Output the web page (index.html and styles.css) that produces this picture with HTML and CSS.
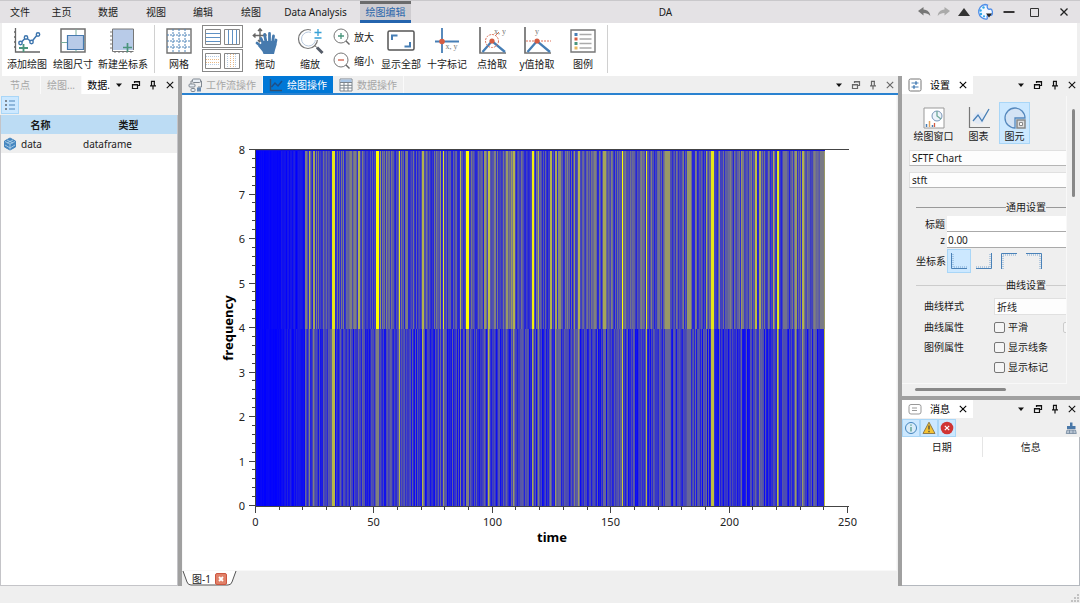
FILE: index.html
```html
<!DOCTYPE html>
<html lang="zh-CN">
<head>
<meta charset="utf-8">
<title>DA</title>
<link rel="stylesheet" href="styles.css">
</head>
<body>
<svg class="defs" aria-hidden="true">
  <symbol id="i-down" viewBox="0 0 10 10"><path d="M2 3.500h6L5 7z" fill="currentColor"/></symbol>
  <symbol id="i-float" viewBox="0 0 10 10"><path d="M3.500 3V1.500h5v4H7M3.500 2h5M1.500 4.500H6.500V8.500h-5zM1.500 5h5" fill="none" stroke="currentColor" stroke-width="1.200"/></symbol>
  <symbol id="i-pin" viewBox="0 0 10 10"><path d="M3.500 1v4.500M6.300 1v4.500M3 1.300h4M2 5.800h6M5 6v3.500" fill="none" stroke="currentColor" stroke-width="1.200"/></symbol>
  <symbol id="i-x" viewBox="0 0 10 10"><path d="M1.800 1.800l6.400 6.400M8.200 1.800L1.800 8.200" fill="none" stroke="currentColor" stroke-width="1.100"/></symbol>
</svg>

<div class="app">
  <header class="titlebar">
    <nav class="menus">
      <button>文件</button><button>主页</button><button>数据</button><button>视图</button><button>编辑</button><button>绘图</button><button>Data Analysis</button><button class="active">绘图编辑</button>
    </nav>
    <h1>DA</h1>
    <div class="window-tools">
      <button aria-label="撤销"><svg viewBox="0 0 14 14"><path d="M1 6L6.500 2v2.500C11 5 13 7.500 13.300 11 11.500 8.700 9.500 8 6.500 8v2.500z" fill="#777"/></svg></button>
      <button aria-label="重做"><svg viewBox="0 0 14 14"><path d="M13 6L7.500 2v2.500C3 5 1 7.500.7 11 2.500 8.700 4.500 8 7.500 8v2.500z" fill="#aaa"/></svg></button>
      <button aria-label="折叠"><svg viewBox="0 0 14 14"><path d="M1 11L7 3l6 8z" fill="#333"/></svg></button>
      <button class="wide" aria-label="主题"><svg class="palette" viewBox="0 0 18 18"><path d="M9 1.500a7 7 0 1 0 2 14.500c1-.8-.6-2.200.3-3.200 1-1 3 .3 4.500-.8C17 10 16.500 6 14.500 6 12 7 10.500 4.500 11.500 2A8 8 0 0 0 9 1.500z" fill="#f3f8ff" stroke="#4d8ce8" stroke-width="1.300"/><g fill="#2fa8e8"><circle cx="7.500" cy="4.500" r="1.200"/><circle cx="4.600" cy="7.500" r="1.200"/><circle cx="5" cy="11" r="1.200"/><circle cx="8" cy="13.300" r="1.100"/></g><path d="M10 10.500h6l-3 4z" fill="#222"/></svg></button>
      <button class="win" aria-label="最小化"><svg viewBox="0 0 14 14"><path d="M1.500 7h11" stroke="#222" stroke-width="1.800"/></svg></button>
      <button class="win" aria-label="最大化"><svg viewBox="0 0 14 14"><path d="M2.500 3.500h8v8h-8z" fill="none" stroke="#333"/></svg></button>
      <button class="win last" aria-label="关闭"><svg viewBox="0 0 14 14"><path d="M3.500 3.500l7 7M10.500 3.500l-7 7" stroke="#222" stroke-width="1.300"/></svg></button>
    </div>
  </header>

  <section class="ribbon">
    <button class="tool"><svg viewBox="0 0 28 28"><path d="M2.500 1v24H27M1 5h2M1 10h2M1 15h2M1 20h2" fill="none" stroke="#666" stroke-width="1.300"/><path d="M7.500 16L13 10.500l5.500 4.500 6-7.500" fill="none" stroke="#3c74ad" stroke-width="1.500"/><g fill="#fff" stroke="#3c74ad" stroke-width="1.400"><circle cx="7.500" cy="16" r="1.700"/><circle cx="13" cy="10.500" r="1.700"/><circle cx="18.500" cy="15" r="1.700"/><circle cx="25" cy="7.500" r="1.700"/></g><path d="M10.500 17v8M6 21h9" stroke="#4a957c" stroke-width="1.800"/></svg><span>添加绘图</span></button>
    <button class="tool"><svg viewBox="0 0 28 28"><path d="M2 2h24v23H2z" fill="#fff" stroke="#707070" stroke-width="1.500"/><path d="M17 2v23M2 15.500h24" stroke="#78ad9b"/><path d="M8.500 8.500h16v14h-16z" fill="#b8cbe8" stroke="#467ab0" stroke-width="1.200"/></svg><span>绘图尺寸</span></button>
    <button class="tool w54"><svg viewBox="0 0 28 28"><path d="M3.500 2h21v21h-21z" fill="#b8cbe8"/><path d="M3.500 2h21M3.500 2v22.500M24.500 2v21M3.500 24.500h21" stroke="#777" fill="none"/><path d="M1 5h2M1 9h2M1 13h2M1 17h2M1 21h2M6 24v2M10 24v2M14 24v2M18 24v2M22 24v2" stroke="#777"/><path d="M18.500 16v9M14 20.500h9" stroke="#4a957c" stroke-width="1.700"/></svg><span>新建坐标系</span></button>
    <i class="rule"></i>
    <button class="tool w42"><svg viewBox="0 0 28 28"><path d="M2 2h24v24H2z" fill="#fff" stroke="#707070" stroke-width="1.400"/><path d="M8 2v24M14 2v24M20 2v24M2 8h24M2 14h24M2 20h24" stroke="#4c83b8" stroke-dasharray="2 1"/></svg><span>网格</span></button>
    <div class="grids">
      <div class="pair">
        <button aria-label="水平主网格"><svg viewBox="0 0 16 16"><path d="M.5.5h15v15H.5z" fill="#fff" stroke="#888"/><path d="M1 4.500h14M1 8.500h14M1 12.500h14" stroke="#5f91c4"/></svg></button>
        <button aria-label="垂直主网格"><svg viewBox="0 0 16 16"><path d="M.5.5h15v15H.5z" fill="#fff" stroke="#888"/><path d="M4.500 1v14M8.500 1v14M12.500 1v14" stroke="#5f91c4"/></svg></button>
      </div>
      <div class="pair">
        <button aria-label="水平次网格"><svg viewBox="0 0 16 16"><path d="M.5.5h15v15H.5z" fill="#fff" stroke="#888"/><path d="M1 3.500h14M1 11.500h14" stroke="#b5cce4" stroke-dasharray="1 1"/><path d="M1 6.500h14M1 9.500h14" stroke="#e9b884" stroke-dasharray="1 1"/></svg></button>
        <button aria-label="垂直次网格"><svg viewBox="0 0 16 16"><path d="M.5.5h15v15H.5z" fill="#fff" stroke="#888"/><path d="M3.500 1v14M11.500 1v14" stroke="#b5cce4" stroke-dasharray="1 1"/><path d="M6.500 1v14M9.500 1v14" stroke="#e9b884" stroke-dasharray="1 1"/></svg></button>
      </div>
    </div>
    <button class="tool w44"><svg viewBox="0 0 28 28"><path d="M9 2v13M2.500 8.500h13M7 4l2-2.200L11 4M7 13l2 2.200M4.500 6.500L2.300 8.500l2.200 2M13.500 6.500l2 2" fill="none" stroke="#666" stroke-width="1.400"/><path d="M12.500 17L10 11.500M15 15l-1.500-7.500M18.500 15V6.500M21.500 16l1-7M24 17.500l1-4.500M11 20l-5-4" stroke="#467aae" stroke-width="2.800" stroke-linecap="round"/><path d="M11.500 14h13l1 4-1.500 5-1 4H12.500l-1-2.500L7 19l3-2z" fill="#467aae"/></svg><span>拖动</span></button>
    <button class="tool"><svg viewBox="0 0 28 28"><circle cx="12" cy="12" r="9.500" fill="none" stroke="#777" stroke-width="1.200"/><circle cx="12.500" cy="12" r="7" fill="none" stroke="#b8c9de"/><path d="M15 0h13v13H15z" fill="#fff"/><path d="M22 2v7M18.500 5.500h7M18.500 11h7" stroke="#36a0d6" stroke-width="1.300"/><path d="M18.500 18.500l2.500 2" stroke="#777"/><path d="M21 20.500l5.500 5.500" stroke="#555c68" stroke-width="3"/></svg><span>缩放</span></button>
    <div class="zooms">
      <button><svg viewBox="0 0 18 18"><circle cx="8" cy="8" r="7" fill="none" stroke="#777"/><path d="M13 13l3.500 3.500" stroke="#666" stroke-width="1.400"/><path d="M8 5v6M5 8h6" stroke="#4a957c" stroke-width="1.300"/></svg><span>放大</span></button>
      <button><svg viewBox="0 0 18 18"><circle cx="8" cy="8" r="7" fill="none" stroke="#777"/><path d="M13 13l3.500 3.500" stroke="#666" stroke-width="1.400"/><path d="M5 8h6" stroke="#ce5d49" stroke-width="1.300"/></svg><span>缩小</span></button>
    </div>
    <button class="tool"><svg viewBox="0 0 28 28"><rect x="1" y="4" width="26" height="19" rx="1.500" fill="#fff" stroke="#555" stroke-width="1.500"/><path d="M5 13V8.500h5.500M23 15v4.500h-5.500" fill="none" stroke="#467eb5" stroke-width="2"/></svg><span>显示全部</span></button>
    <button class="tool"><svg viewBox="0 0 28 28"><path d="M9 1v25M2 14.500h24" stroke="#467eb5" stroke-width="1.800"/><circle cx="9" cy="14.500" r="2.800" fill="#d55c42"/><text x="12.500" y="22" class="glyph">x, y</text></svg><span>十字标记</span></button>
    <button class="tool w44"><svg viewBox="0 0 28 28"><path d="M2 0v26h26" fill="none" stroke="#707070" stroke-width="1.700"/><path d="M4.500 25L14 14l13 11" fill="none" stroke="#467eb5" stroke-width="2.300"/><circle cx="14" cy="14" r="6.500" fill="none" stroke="#db7159" stroke-dasharray="2 1"/><circle cx="14" cy="14" r="2.600" fill="#d55c42"/><path d="M17 9l4-4" stroke="#db7159"/><text x="16" y="7" class="glyph">x, y</text></svg><span>点拾取</span></button>
    <button class="tool"><svg viewBox="0 0 28 28"><path d="M2 0v26h26" fill="none" stroke="#707070" stroke-width="1.700"/><path d="M4.500 25L14 14l13 11" fill="none" stroke="#467eb5" stroke-width="2.300"/><path d="M3 14h25" stroke="#db7159" stroke-dasharray="2 1"/><circle cx="14" cy="14" r="2.600" fill="#d55c42"/><text x="12" y="7" class="glyph">y</text></svg><span>y值拾取</span></button>
    <button class="tool"><svg viewBox="0 0 28 28"><path d="M2 3h24v22H2z" fill="#fff" stroke="#777" stroke-width="1.400"/><path d="M10.500 7.500h12M10.500 12h12M10.500 16.500h12M10.500 21h12" stroke="#aaa" stroke-width="1.300"/><path d="M5.500 6h3v3h-3z" fill="#467eb5"/><path d="M5.500 10.500h3v3h-3z" fill="#d55c42"/><path d="M5.500 15h3v3h-3z" fill="#4a957c"/><path d="M5.500 19.500h3v3h-3z" fill="#e9b95f"/></svg><span>图例</span></button>
    <i class="rule end"></i>
  </section>

  <main class="workspace">
    <aside class="dock data-dock">
      <div class="tabs">
        <button class="tab dim">节点</button><button class="tab dim">绘图...</button><button class="tab on">数据.</button>
        <div class="dock-tools"><button aria-label="菜单"><svg><use href="#i-down"/></svg></button><button aria-label="浮动"><svg><use href="#i-float"/></svg></button><button aria-label="固定"><svg><use href="#i-pin"/></svg></button><button aria-label="关闭"><svg><use href="#i-x"/></svg></button></div>
      </div>
      <div class="list-bar"><button class="toggle" aria-label="列表"><svg viewBox="0 0 14 14"><g fill="#7d8791"><path d="M2 2h2v2H2zM2 6h2v2H2zM2 10h2v2H2z"/></g><path d="M6 3h6M6 7h6M6 11h6" stroke="#4f83b8" stroke-width="1.200"/></svg></button></div>
      <div class="list">
        <table>
          <thead><tr><th>名称</th><th>类型</th></tr></thead>
          <tbody><tr><td><svg viewBox="0 0 14 14"><path d="M7 1l5.500 3v6L7 13l-5.500-3V4z" fill="#4787c0" stroke="#4787c0" stroke-linejoin="round"/><path d="M2 4.500L7 7l5-2.500M7 7v5.500M4 3l6 3M10 3L4 6M2 8l5 3 5-3" fill="none" stroke="#b6d5ee" stroke-width=".8"/></svg><span>data</span></td><td>dataframe</td></tr></tbody>
        </table>
      </div>
    </aside>

    <i class="splitter"></i>

    <section class="center">
      <div class="tabs blue-line">
        <button class="tab dim"><svg viewBox="0 0 14 14"><g fill="#e8eef5" stroke="#808891"><rect x="4.500" y="1" width="8" height="3.500" rx="1"/><rect x="1" y="6" width="6" height="3" rx="1"/><rect x="3" y="10.500" width="4" height="3" rx="1"/></g><path d="M12.500 3h1v6h-3.500M3 6V3h1" fill="none" stroke="#808891"/><rect x="9" y="9.500" width="4" height="4" fill="#6c8db0"/></svg>工作流操作</button>
        <button class="tab chosen"><svg viewBox="0 0 14 14"><path d="M1.500 1v11.500H13" fill="none" stroke="#34506f" stroke-width="1.400"/><path d="M2.500 9L6 5l3 3 4-5" fill="none" stroke="#1d4f88" stroke-width="1.500"/></svg>绘图操作</button>
        <button class="tab dim"><svg viewBox="0 0 14 14"><path d="M1 1h12v12H1z" fill="#fff" stroke="#7c858e"/><path d="M1.500 1.500h11V4h-11z" fill="#a8c5e6"/><path d="M1 4.500h12M1 7.300h12M1 10h12M5 4.500V13M9 4.500V13" stroke="#7c858e"/></svg>数据操作</button>
        <div class="dock-tools grey"><button aria-label="菜单"><svg><use href="#i-down"/></svg></button><button aria-label="浮动"><svg><use href="#i-float"/></svg></button><button aria-label="固定"><svg><use href="#i-pin"/></svg></button><button aria-label="关闭"><svg><use href="#i-x"/></svg></button></div>
      </div>
      <div class="canvas"><svg id="chart" viewBox="0 0 713 475" role="img" aria-label="frequency / time"></svg></div>
      <div class="sheet-tabs">
        <div class="sheet"><svg class="sheet-shape" viewBox="0 0 55 15" preserveAspectRatio="none"><path d="M1 0l4 11q1 3 4 3h37q3 0 4-3l4-11" fill="#fff" stroke="#555"/></svg><span>图-1</span><button aria-label="关闭图-1"><svg viewBox="0 0 12 12"><rect x=".5" y=".5" width="11" height="11" rx="1.500" fill="#e08068" stroke="#cc5640"/><path d="M4 4l4 4M8 4L4 8" stroke="#fff" stroke-width="1.800"/></svg></button></div>
      </div>
    </section>

    <i class="splitter"></i>

    <aside class="right">
      <section class="dock settings">
        <div class="tabs">
          <button class="tab on big"><svg viewBox="0 0 14 14"><rect x="1" y="1" width="12" height="12" rx="1.500" fill="#fff" stroke="#777"/><path d="M3.500 5h7M3.500 9h7" stroke="#467eb5"/><path d="M8 3.300v3.400M6 7.300v3.400" stroke="#467eb5" stroke-width="1.500"/></svg><span>设置</span><svg class="mini"><use href="#i-x"/></svg></button>
          <div class="dock-tools"><button aria-label="菜单"><svg><use href="#i-down"/></svg></button><button aria-label="浮动"><svg><use href="#i-float"/></svg></button><button aria-label="固定"><svg><use href="#i-pin"/></svg></button><button aria-label="关闭"><svg><use href="#i-x"/></svg></button></div>
        </div>
        <div class="scroll">
          <div class="form">
            <div class="modes">
              <button><svg viewBox="0 0 22 22"><path d="M1 1h20v20H1z" fill="#fff" stroke="#999"/><circle cx="14" cy="9" r="5" fill="#eef4fb" stroke="#7996b8"/><path d="M14 4v5l4 3" fill="none" stroke="#6fa998" stroke-width="1.300"/><path d="M3.500 20v-3M9.500 20v-2" stroke="#467eb5" stroke-width="1.500"/><path d="M6.500 20v-6" stroke="#e2a25e" stroke-width="1.500"/><path d="M11.500 20v-4" stroke="#d55c42" stroke-width="1.300"/></svg><span>绘图窗口</span></button>
              <button><svg viewBox="0 0 22 22"><circle cx="11" cy="11" r="6" fill="#e1e9f5"/><path d="M1.500 0v20.500H22" fill="none" stroke="#777" stroke-width="1.200"/><path d="M5 14l5-6 4 6 7-12" fill="none" stroke="#467eb5" stroke-width="1.300"/></svg><span>图表</span></button>
              <button class="picked"><svg viewBox="0 0 22 22"><path d="M11 21A10 10 0 1 1 21 11H11z" fill="#d3e3f5" stroke="#5588bd" stroke-width="1.300"/><path d="M13 13h8v8h-8z" fill="#ddd" stroke="#888" stroke-width="1.500"/><path d="M15.500 15.500h3v3h-3z" fill="#fff" stroke="#888"/></svg><span>图元</span></button>
            </div>
            <input class="field" aria-label="图表类型" value="SFTF Chart">
            <input class="field" aria-label="名称" value="stft">
            <h2>通用设置</h2>
            <label class="line">标题<input></label>
            <label class="line">z<input value="0.00"></label>
            <div class="line axes"><span>坐标系</span>
              <button class="picked" aria-label="左下"><svg viewBox="0 0 20 20"><path d="M2.500 2v15.500H18" fill="none" stroke="#4b82b8"/><path d="M4 3v13h14" fill="none" stroke="#7ba5cf" stroke-dasharray="1 1"/></svg></button>
              <button aria-label="右下"><svg viewBox="0 0 20 20"><path d="M17.500 2v15.500H2" fill="none" stroke="#4b82b8"/><path d="M16 3v13H2" fill="none" stroke="#7ba5cf" stroke-dasharray="1 1"/></svg></button>
              <button aria-label="左上"><svg viewBox="0 0 20 20"><path d="M2.500 18V2.500H18" fill="none" stroke="#4b82b8"/><path d="M4 18V4h14" fill="none" stroke="#7ba5cf" stroke-dasharray="1 1"/></svg></button>
              <button aria-label="右上"><svg viewBox="0 0 20 20"><path d="M17.500 18V2.500H2" fill="none" stroke="#4b82b8"/><path d="M16 18V4H2" fill="none" stroke="#7ba5cf" stroke-dasharray="1 1"/></svg></button>
            </div>
            <h2 class="light">曲线设置</h2>
            <div class="curve">
              <label for="style">曲线样式</label>
              <select id="style"><option>折线</option></select>
              <span>曲线属性</span>
              <div class="checks"><label><input type="checkbox">平滑</label><input type="checkbox" class="faint" aria-label="填充"></div>
              <span>图例属性</span>
              <div class="stack"><label><input type="checkbox">显示线条</label><label><input type="checkbox">显示标记</label></div>
            </div>
          </div>
          <div class="vbar"><i></i></div>
          <div class="hbar"><i></i></div>
        </div>
      </section>
      <i class="hsplit"></i>
      <section class="dock messages">
        <div class="tabs">
          <button class="tab on big"><svg viewBox="0 0 14 14"><rect x="1" y="2.500" width="12" height="9.500" rx="2" fill="#fff" stroke="#999"/><path d="M4 6h5M4 8.500h5" stroke="#999"/></svg><span>消息</span><svg class="mini"><use href="#i-x"/></svg></button>
          <div class="dock-tools"><button aria-label="菜单"><svg><use href="#i-down"/></svg></button><button aria-label="浮动"><svg><use href="#i-float"/></svg></button><button aria-label="固定"><svg><use href="#i-pin"/></svg></button><button aria-label="关闭"><svg><use href="#i-x"/></svg></button></div>
        </div>
        <div class="msg-bar">
          <button class="toggle" aria-label="信息"><svg viewBox="0 0 14 14"><circle cx="7" cy="7" r="5.500" fill="#d9ecfa" stroke="#4384bd"/><path d="M7 3.500v1.300M7 6v4.500" stroke="#4a957c" stroke-width="1.200"/></svg></button>
          <button class="toggle" aria-label="警告"><svg viewBox="0 0 14 14"><path d="M7 1.200L13 12.500H1z" fill="#f6c433" stroke="#8d7a4a" stroke-linejoin="round"/><path d="M7 4.500v4M7 9.700v1.500" stroke="#444" stroke-width="1.300"/></svg></button>
          <button class="toggle" aria-label="错误"><svg viewBox="0 0 14 14"><circle cx="7" cy="7" r="6.300" fill="#d03434"/><path d="M4.800 4.800l4.400 4.400M9.200 4.800L4.800 9.200" stroke="#fff" stroke-width="1.200"/></svg></button>
          <button class="clear" aria-label="清除"><svg viewBox="0 0 14 14"><path d="M6 1.500h2.500V5H6z" fill="#4a78a8"/><path d="M3 5h8.500v3H3z" fill="#4a78a8"/><path d="M3 9h8.500l.8 3.500H2.200z" fill="#b7c4d2" stroke="#71869c" stroke-width=".8"/><path d="M5.500 9v3.500M9 9v3.500" stroke="#71869c" stroke-width=".8"/></svg></button>
        </div>
        <div class="msg-list"><table><thead><tr><th>日期</th><th>信息</th></tr></thead></table></div>
      </section>
    </aside>
  </main>
  <footer class="status"><svg viewBox="0 0 9 9"><path d="M6 0h2v2H6zM6 3h2v2H6zM3 3h2v2H3zM6 6h2v2H6zM3 6h2v2H3zM0 6h2v2H0z" fill="#c2c2c2"/></svg></footer>
</div>
<script src="chart.js"></script>
</body>
</html>
```
FILE: styles.css
```css
* { box-sizing: border-box; }
body {
  margin: 0;
  font: 10px/14px "Noto Sans", "Noto Sans CJK SC", sans-serif;
  color: #1a1a1a;
  background: #efefef;
}
button, input, select { font: inherit; color: inherit; }
button { border: 0; padding: 0; background: none; white-space: nowrap; }
svg { display: block; flex: none; }
i { display: block; }
.defs { position: absolute; width: 0; height: 0; }
.app { height: 100vh; display: flex; flex-direction: column; overflow: hidden; }

/* title bar */
.titlebar { display: flex; height: 23px; background: #e4e2e5; border-top: 1px solid #c9c8cb; flex: none; }
.menus { display: grid; grid-template-columns: 40px 43px 50px 46px 48px 48px 85px 51px; }
.menus button:nth-child(7) { padding-right: 4px; }
.menus .active { background: #cfcdd1; color: #2a66ab; border-top: 3px solid #6b6b6b; border-bottom: 3px solid #2464ae; line-height: 14px; }
.titlebar h1 { flex: 1; margin: 0; padding-left: 6px; font-size: 10px; font-weight: 400; line-height: 22px; text-align: center; }
.window-tools { display: flex; align-items: center; }
.window-tools button { width: 20px; display: flex; justify-content: center; }
.window-tools svg { width: 14px; height: 14px; }
.window-tools .palette { width: 18px; height: 18px; }
.window-tools .wide { width: 22px; }
.window-tools .win { width: 26px; }
.window-tools .last { width: 32px; }

/* ribbon */
.ribbon { display: flex; height: 53px; margin: 0 3px 0 2px; padding: 2px 2px 3px; background: #fff; flex: none; }
.tool { width: 46px; display: flex; flex-direction: column; align-items: center; gap: 2px; padding-top: 2px; }
.tool svg { width: 28px; height: 28px; }
.tool span { line-height: 14px; }
.w54 { width: 54px; }
.w44 { width: 44px; }
.w42 { width: 42px; }
.rule { width: 1px; margin: 0 3px 0 4px; background: #d0d0d0; }
.rule.end { margin-left: 1px; }
.glyph { font: 8px "Liberation Serif", serif; fill: #777; }
.grids { display: flex; flex-direction: column; gap: 1px; width: 41px; margin: 0 0 0 2px; }
.pair { display: flex; justify-content: space-around; align-items: center; height: 23px; border: 1px solid #888; }
.pair svg { width: 16px; height: 16px; }
.zooms { width: 45px; display: flex; flex-direction: column; gap: 5px; padding-top: 2px; }
.zooms button { display: flex; align-items: center; gap: 3px; height: 19px; }
.zooms svg { width: 18px; height: 18px; }

/* docks */
.workspace { flex: 1; display: flex; min-height: 0; }
.splitter { width: 4px; background: #a0a0a0; flex: none; }
.hsplit { height: 4px; background: #a0a0a0; flex: none; }
.dock { display: flex; flex-direction: column; min-height: 0; }
.tabs { display: flex; height: 18px; flex: none; }
.tab { display: flex; align-items: center; justify-content: center; border-right: 1px solid #fafafa; }
.tab svg { width: 14px; height: 14px; }
.tab.dim { color: #a6a6a6; }
.tab.on { background: #fff; color: #000; }
.dock-tools { margin-left: auto; display: flex; align-items: center; color: #111; }
.dock-tools button { width: 17px; display: flex; justify-content: center; }
.dock-tools svg, .tab .mini { width: 10px; height: 10px; }
.dock-tools.grey { color: #666; }
.dock-tools.grey button:first-child { color: #111; }
.toggle { display: flex; align-items: center; justify-content: center; width: 18px; height: 18px; background: #cce8ff; border: 1px solid #a9d6f7; }
.toggle svg { width: 14px; height: 14px; }

.data-dock { width: 178px; flex: none; }
.data-dock .tab { width: 41px; }
.data-dock .tab.on { width: 28px; border: 0; justify-content: flex-end; }
.list-bar { padding: 2px 1px 1px; flex: none; }
.list { flex: 1; background: #fff; border: 1px solid #c4c4c8; border-top: 0; }
table { border-collapse: collapse; width: 100%; table-layout: fixed; }
.list th { height: 19px; padding: 0; background: #bcdcf4; font-weight: 700; }
.list th:first-child { width: 79px; }
.list tbody tr { background: #efefef; }
.list td { height: 19px; padding: 0 0 0 3px; }
.list td svg { width: 14px; height: 14px; display: inline-block; vertical-align: middle; margin: 0 4px 0 -1px; }
.list td:first-child span { vertical-align: middle; }

/* centre */
.center { flex: 1; min-width: 0; display: flex; flex-direction: column; }
.blue-line { height: 19px; border-bottom: 2px solid #2a82d0; }
.center .tab { gap: 4px; padding: 0 6px; }
.center .tab.chosen { background: #0078d7; color: #fff; width: 70px; border: 0; }
.center .tab.dim { border-color: #fafafa; }
.canvas { flex: 1; min-height: 0; margin-right: 1px; background: #fff; border: 1px solid #f8f8f8; border-width: 0 1px 1px; }
.canvas svg { width: 100%; height: 100%; }
.sheet-tabs { flex: none; height: 15px; display: flex; }
.sheet { position: relative; width: 55px; display: flex; align-items: center; justify-content: center; gap: 4px; }
.sheet-shape { position: absolute; inset: 0; width: 100%; height: 100%; }
.sheet span, .sheet button { position: relative; }
.sheet button svg { width: 12px; height: 12px; }
#chart text { font-size: 11px; fill: #222; text-anchor: middle; }
#chart .axis-title { font-size: 13px; font-weight: 700; fill: #000; }

/* settings */
.right { width: 178px; flex: none; display: flex; flex-direction: column; }
.settings { height: 320px; flex: none; }
.tab.big { width: 71px; justify-content: space-between; padding: 0 5px 0 6px; border: 0; }
.scroll { flex: 1; min-height: 0; display: grid; grid-template-columns: 165px 1fr; grid-template-rows: 1fr 12px; padding-top: 2px; }
.form { overflow: hidden; padding: 6px 0 0 7px; border-right: 1px solid #f8f8f8; border-bottom: 1px solid #f8f8f8; }
.modes { display: flex; gap: 5px; }
.modes button { display: flex; flex-direction: column; align-items: center; gap: 0; width: 31px; height: 42px; padding-top: 4px; border: 1px solid transparent; }
.modes button:first-child { width: 49px; }
.modes svg { width: 22px; height: 22px; }
.form .picked { background: #cce8ff; border: 1px solid #a9d6f7; }
.field { display: block; width: 100%; height: 16px; margin-top: 6px; padding: 0 2px; border: 1px solid #e0e0e0; border-bottom-color: #b5b5b5; border-right: 0; background: #fdfdfd; }
.form h2 { display: flex; align-items: center; margin: 12px 0 2px 7px; font-size: 10px; font-weight: 400; line-height: 14px; }
.form h2::before { content: ""; width: 90px; height: 1px; background: #999; }
.form h2::after { content: ""; flex: 1; height: 1px; background: #999; }
.form h2.light { margin: 5px 0 6px 7px; }
.form h2.light::before, .form h2.light::after { background: #ccc; }
.line { display: grid; grid-template-columns: 36px 1fr; gap: 2px; height: 16px; align-items: center; text-align: right; }
.line input { width: 100%; height: 16px; padding: 0 1px; border: 0; border-bottom: 1px solid #aaa; background: #fff; }
.axes { grid-template-columns: 37px 24px 24px 24px 24px; height: 24px; gap: 1px; margin-top: 1px; }
.axes button { width: 24px; height: 24px; padding: 1px; border: 1px solid transparent; }
.axes svg { width: 20px; height: 20px; }
.curve { display: grid; grid-template-columns: 70px 1fr; row-gap: 4px; padding-left: 15px; }
.curve > span, .curve > label { line-height: 16px; }
.curve select { appearance: none; height: 17px; border: 1px solid #e0e0e0; background: #fdfdfd; padding: 0 2px; border-radius: 0; border-right: 0; }
.checks { display: flex; justify-content: space-between; align-items: center; overflow: hidden; }
.curve div label { display: flex; align-items: center; gap: 3px; line-height: 14px; }
.curve input { appearance: none; flex: none; width: 11px; height: 11px; margin: 0; border: 1px solid #777; border-radius: 2px; background: #f5f5f5; }
.curve .faint { border-color: #ccc; margin-right: -8px; }
.stack { display: flex; flex-direction: column; gap: 6px; padding-top: 1px; }
.vbar { padding: 13px 0 0 5px; }
.vbar i { width: 3px; height: 88px; border-radius: 2px; background: #888; }
.hbar { padding: 4px 0 0 13px; }
.hbar i { width: 91px; height: 3px; border-radius: 2px; background: #888; }

/* messages */
.messages { flex: 1; }
.msg-bar { display: flex; padding: 1px 2px 0 0; flex: none; }
.clear { margin-left: auto; }
.clear svg { width: 14px; height: 14px; }
.msg-list { flex: 1; background: #fff; border-right: 1px solid #b4b8be; border-bottom: 1px solid #b4b8be; }
.msg-list th { height: 20px; padding: 0; font-weight: 400; }
.msg-list th:first-child { width: 80px; border-right: 1px solid #e5e5e5; }
.status { height: 17px; flex: none; display: flex; justify-content: flex-end; align-items: flex-end; }
.status svg { width: 9px; height: 9px; }
```
FILE: chart.js
```js
const NS = "http://www.w3.org/2000/svg";
const chart = document.getElementById("chart");

function add(tag, attrs, text) {
  const node = document.createElementNS(NS, tag);
  for (const key in attrs) node.setAttribute(key, attrs[key]);
  if (text !== undefined) node.textContent = text;
  chart.appendChild(node);
}

const left = 73, top0 = 55, width = 592, height = 356, cols = 569, half = 179;

let seed = 41;
function rand() {
  seed = (seed * 1103515245 + 12345) % 2147483648;
  return seed / 2147483648;
}

// [column, width, upper band level, lower band level]
const peaks = [
  [49,2,.5,.4],[53,1,.7,.5],[57,2,.65,.5],[60,1,.5,.3],[76,3,.9,.72],[87,1,.5,.3],[94,2,.5,.4],[98,2,.5,.3],
  [102,2,.7,.4],[106,1,.5,.4],[120,3,1,.5],[124,1,.6,.3],[130,1,.5,.3],[143,1,.9,.7],[150,2,.5,.3],[166,2,.7,.7],
  [184,1,.6,.4],[187,1,.9,.6],[204,1,.7,.5],[210,3,1,.5],[228,2,.6,.4],[232,2,.75,.7],[238,2,.5,.3],[250,2,.6,.4],
  [255,1,.6,.4],[257,2,.7,.6],[276,2,.95,.65],[282,1,.7,.5],[294,2,.7,.5],[299,2,.65,.6],[302,3,.55,.4],[311,1,.5,.3],
  [318,1,.6,.5],[322,2,.7,.6],[338,2,.5,.3],[347,3,.65,.4],[355,1,.5,.3],[366,1,1,.8],[385,1,.5,.3],[390,1,.9,.7],
  [395,1,.5,.3],[409,5,.6,.4],[427,1,.5,.3],[431,4,.6,.4],[439,1,.5,.4],[450,1,.65,.4],[455,3,.9,.75],[463,1,.6,.4],
  [474,1,.5,.3],[485,1,.6,.4],[495,1,.5,.3],[499,2,.75,.4],[503,2,.65,.5],[517,1,.7,.3],[521,2,.9,.75],[527,4,.45,.3],
  [539,2,.6,.6],[544,1,.5,.3],[546,2,.7,.6],[558,1,.5,.4],[564,5,.48,.15],[568,1,.6,.75]
];

const upper = [], lower = [];
for (let x = 0; x < cols; x++) {
  const cap = x < 25 ? 0.04 : x < 49 ? 0.14 : 0.48;
  const floor = x < 49 ? 0 : 0.12;
  upper.push(floor + rand() * (cap - floor));
  lower.push(x < 49 ? rand() * cap : 0.03 + rand() * 0.35);
}
for (const [x, w, a, b] of peaks) {
  for (let k = 0; k < w && x + k < cols; k++) { upper[x + k] = a; lower[x + k] = k === 0 || w > 2 ? b : b * 0.7; }
}

function color(v) {
  const c = Math.round(255 * v);
  return `rgb(${c},${c},${255 - c})`;
}
for (let x = 0; x < cols; x++) {
  add("rect", { x: left + x, y: top0, width: 1, height: half, fill: color(upper[x]), "shape-rendering": "crispEdges" });
  add("rect", { x: left + x, y: top0 + half, width: 1, height: height - half, fill: color(lower[x]), "shape-rendering": "crispEdges" });
}
add("rect", { x: left, y: top0, width: cols, height: 1, fill: "#1111dd" });

function line(x1, y1, x2, y2) {
  add("path", { d: `M${x1} ${y1}L${x2} ${y2}`, stroke: "#444", "stroke-width": 1, "shape-rendering": "crispEdges" });
}
line(left, top0 - 0.5, left + width + 1, top0 - 0.5);
line(left, top0 + height + 0.5, left + width + 1, top0 + height + 0.5);
line(left - 0.5, top0, left - 0.5, top0 + height);

for (let i = 0; i <= 40; i++) {
  const y = Math.round(top0 + height - i * height / 40) - 0.5;
  const major = i % 5 === 0;
  line(left - (major ? 7 : 4), y, left, y);
  if (major) add("text", { x: left - 14, y: y + 4 }, i / 5);
}
for (let i = 0; i <= 25; i++) {
  const x = Math.round(left + i * width / 25) - 0.5;
  const major = i % 5 === 0;
  line(x, top0 + height, x, top0 + height + (major ? 7 : 4));
  if (major) add("text", { x: x, y: top0 + height + 20 }, i * 10);
}
add("text", { x: left + width / 2, y: top0 + height + 36, class: "axis-title" }, "time");
add("text", { transform: `translate(${left - 23} ${top0 + height / 2}) rotate(-90)`, class: "axis-title" }, "frequency");
```
